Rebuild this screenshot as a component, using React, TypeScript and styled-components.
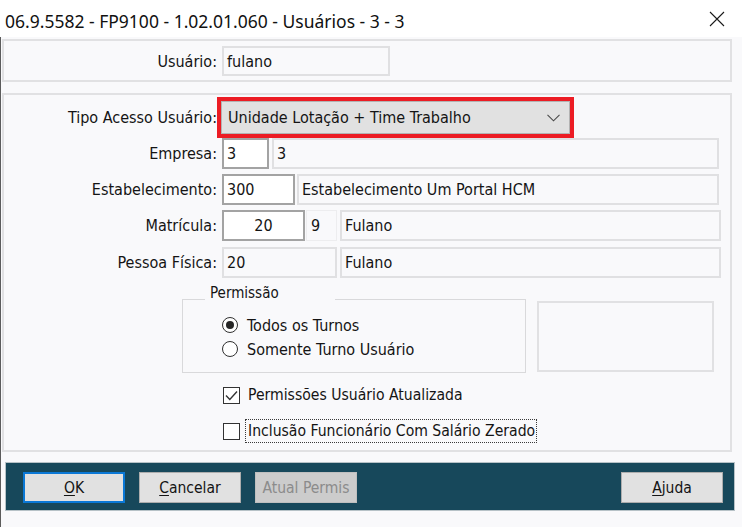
import React from "react";
import styled, { createGlobalStyle, css } from "styled-components";

const FORM_FONT = `"DejaVu Sans Condensed", "DejaVu Sans", sans-serif`;

const GlobalStyle = createGlobalStyle`
  html, body { margin: 0; padding: 0; background: #f9f9fb; }
  body { font-family: ${FORM_FONT}; color: #141414; }
  *, *::before, *::after { box-sizing: border-box; }
`;

const Window = styled.div`
  width: 742px;
  height: 527px;
  display: flex;
  flex-direction: column;
  background: #f9f9fb;
  overflow: hidden;
`;

const TitleBar = styled.div`
  height: 37px;
  flex-shrink: 0;
  background: #ffffff;
  display: flex;
  align-items: center;
  justify-content: space-between;
  padding: 4px 17px 0 5px;
`;

const TitleText = styled.span`
  font-family: "Noto Sans", sans-serif;
  font-size: 17.5px;
  color: #111;
  white-space: nowrap;
`;

const CloseButton = styled.span`
  display: flex;
  width: 16px;
  height: 16px;
  margin-top: -4px;
`;

const Body = styled.div`
  flex: 1;
  display: flex;
  flex-direction: column;
  border-left: 1px solid #5c5c5c;
  padding-top: 2px;
`;

const Panel = styled.div<{ $h: number; $mt?: number }>`
  height: ${(p) => p.$h}px;
  margin: ${(p) => p.$mt ?? 0}px 10px 0 1px;
  border: 2px solid #e1e1e3;
  display: flex;
  flex-direction: column;
`;

const Label = styled.span`
  width: 213px;
  flex-shrink: 0;
  text-align: right;
  white-space: nowrap;
  font-size: 16px;
  align-self: center;
`;

const FieldRow = styled.div<{ $mt?: number; $h?: number }>`
  display: flex;
  height: ${(p) => p.$h ?? 31}px;
  margin-top: ${(p) => p.$mt ?? 0}px;
  & > ${Label} {
    margin-right: 5px;
  }
`;

type BoxKind = "edit" | "ro" | "faint";

const TextBox = styled.div<{ $w: number; $kind: BoxKind; $ml?: number; $center?: boolean }>`
  width: ${(p) => p.$w}px;
  flex-shrink: 0;
  margin-left: ${(p) => p.$ml ?? 0}px;
  display: flex;
  align-items: center;
  justify-content: ${(p) => (p.$center ? "center" : "flex-start")};
  padding: 0 3px;
  font-size: 16px;
  white-space: nowrap;
  overflow: hidden;
  ${(p) =>
    p.$kind === "edit"
      ? css`
          background: #ffffff;
          border: 2px solid #a3a3a3;
        `
      : p.$kind === "ro"
      ? css`
          background: #f9f9fb;
          border: 2px solid #e0e0e2;
        `
      : css`
          background: #f9f9fb;
          border: 1px solid #ededef;
          padding-left: 4px;
        `}
`;

const ComboRow = styled.div`
  display: flex;
  height: 41px;
  margin-top: 2px;
`;

const ComboFrame = styled.div`
  width: 357px;
  border: 4px solid #ec1c24;
  display: flex;
`;

const Combo = styled.div`
  flex: 1;
  background: #e1e1e1;
  border: 1px solid #b3b3b3;
  display: flex;
  align-items: center;
  justify-content: space-between;
  padding: 0 9px 0 6px;
  font-size: 16px;
  white-space: nowrap;
`;

const GroupRow = styled.div`
  display: flex;
  align-items: flex-start;
  margin: 21px 0 0 178px;
`;

const GroupBox = styled.div`
  position: relative;
  width: 344px;
  height: 74px;
  border: 1px solid #d9d9db;
  padding: 13px 0 0 39px;
  display: flex;
  flex-direction: column;
`;

const GroupCaption = styled.span`
  position: absolute;
  top: -16px;
  left: 22px;
  width: 130px;
  height: 18px;
  padding-left: 5px;
  background: #f9f9fb;
  font-size: 15px;
  line-height: 18px;
  white-space: nowrap;
`;

const EmptyBox = styled.div`
  width: 177px;
  height: 71px;
  margin: 2px 0 0 11px;
  border: 2px solid #e1e1e3;
`;

const OptionRow = styled.label`
  display: flex;
  align-items: center;
  height: 24px;
  font-size: 16px;
  white-space: nowrap;
  gap: 9px;
`;

const RadioCircle = styled.span<{ $on?: boolean }>`
  width: 16px;
  height: 16px;
  border-radius: 50%;
  border: 1.5px solid #303030;
  background: #fff;
  display: flex;
  align-items: center;
  justify-content: center;
  &::after {
    content: "";
    width: 8px;
    height: 8px;
    border-radius: 50%;
    background: ${(p) => (p.$on ? "#262626" : "transparent")};
  }
`;

const CheckList = styled.div`
  display: flex;
  flex-direction: column;
  gap: 12px;
  margin: 10px 0 0 219px;
`;

const CheckRow = styled.label`
  display: flex;
  align-items: center;
  height: 24px;
  gap: 5px;
  font-size: 15.6px;
  white-space: nowrap;
`;

const CheckBox = styled.span`
  width: 17px;
  height: 17px;
  border: 1px solid #333;
  background: #fff;
  display: flex;
  align-items: center;
  justify-content: center;
`;

const CheckText = styled.span<{ $focus?: boolean }>`
  height: 24px;
  display: flex;
  align-items: center;
  padding: 0 1px 0 2px;
  border: 1px dotted ${(p) => (p.$focus ? "#3a3a3a" : "transparent")};
`;

const Footer = styled.div`
  height: 49px;
  margin: 10px 7px 0 4px;
  background: #17485b;
  border: 1px solid #b7c2c7;
  display: flex;
  align-items: flex-start;
  gap: 14px;
  padding: 9px 11px 0 17px;
`;

const Spacer = styled.div`
  flex: 1;
`;

const Button = styled.div<{ $default?: boolean; $disabled?: boolean }>`
  width: 102px;
  height: 31px;
  display: flex;
  align-items: center;
  justify-content: center;
  font-size: 15.5px;
  background: #e1e1e1;
  border: 1px solid #adadad;
  color: #141414;
  ${(p) =>
    p.$default &&
    css`
      border: 2px solid #0a78d6;
    `}
  ${(p) =>
    p.$disabled &&
    css`
      background: #cccccc;
      border-color: #bfbfbf;
      color: #8b8b8b;
    `}
  & u {
    text-decoration-thickness: 1px;
    text-underline-offset: 2px;
  }
`;

export default function App() {
  return (
    <Window>
      <GlobalStyle />
      <TitleBar>
        <TitleText>06.9.5582 - FP9100 - 1.02.01.060 - Usuários - 3 - 3</TitleText>
        <CloseButton>
          <svg width="16" height="16" viewBox="0 0 16 16">
            <path d="M1 1 L15 15 M15 1 L1 15" stroke="#1a1a1a" strokeWidth="1.1" fill="none" />
          </svg>
        </CloseButton>
      </TitleBar>
      <Body>
        <Panel $h={43}>
          <FieldRow $mt={5} $h={30}>
            <Label>Usuário:</Label>
            <TextBox $w={168} $kind="ro">fulano</TextBox>
          </FieldRow>
        </Panel>
        <Panel $h={359} $mt={11}>
          <ComboRow>
            <Label>Tipo Acesso Usuário:</Label>
            <ComboFrame>
              <Combo>
                <span>Unidade Lotação + Time Trabalho</span>
                <svg width="13" height="8" viewBox="0 0 13 8">
                  <path d="M0.5 0.8 L6.5 6.8 L12.5 0.8" stroke="#4a4a4a" strokeWidth="1.1" fill="none" />
                </svg>
              </Combo>
            </ComboFrame>
          </ComboRow>
          <FieldRow>
            <Label>Empresa:</Label>
            <TextBox $w={47} $kind="edit">3</TextBox>
            <TextBox $w={447} $kind="ro" $ml={3}>3</TextBox>
          </FieldRow>
          <FieldRow $mt={5}>
            <Label>Estabelecimento:</Label>
            <TextBox $w={73} $kind="edit">300</TextBox>
            <TextBox $w={422} $kind="ro" $ml={2}>Estabelecimento Um Portal HCM</TextBox>
          </FieldRow>
          <FieldRow $mt={5}>
            <Label>Matrícula:</Label>
            <TextBox $w={83} $kind="edit" $center>20</TextBox>
            <TextBox $w={31} $kind="faint" $ml={1}>9</TextBox>
            <TextBox $w={381} $kind="ro" $ml={3}>Fulano</TextBox>
          </FieldRow>
          <FieldRow $mt={6}>
            <Label>Pessoa Física:</Label>
            <TextBox $w={115} $kind="ro">20</TextBox>
            <TextBox $w={381} $kind="ro" $ml={3}>Fulano</TextBox>
          </FieldRow>
          <GroupRow>
            <GroupBox>
              <GroupCaption>Permissão</GroupCaption>
              <OptionRow>
                <RadioCircle $on />
                Todos os Turnos
              </OptionRow>
              <OptionRow>
                <RadioCircle />
                Somente Turno Usuário
              </OptionRow>
            </GroupBox>
            <EmptyBox />
          </GroupRow>
          <CheckList>
            <CheckRow>
              <CheckBox>
                <svg width="13" height="11" viewBox="0 0 13 11">
                  <path d="M1 5.5 L4.8 9.5 L12 1.5" stroke="#333" strokeWidth="1.4" fill="none" />
                </svg>
              </CheckBox>
              <CheckText>Permissões Usuário Atualizada</CheckText>
            </CheckRow>
            <CheckRow>
              <CheckBox />
              <CheckText $focus>Inclusão Funcionário Com Salário Zerado</CheckText>
            </CheckRow>
          </CheckList>
        </Panel>
        <Footer>
          <Button $default>
            <span>
              <u>O</u>K
            </span>
          </Button>
          <Button>
            <span>
              <u>C</u>ancelar
            </span>
          </Button>
          <Button $disabled>Atual Permis</Button>
          <Spacer />
          <Button>
            <span>
              <u>A</u>juda
            </span>
          </Button>
        </Footer>
      </Body>
    </Window>
  );
}
